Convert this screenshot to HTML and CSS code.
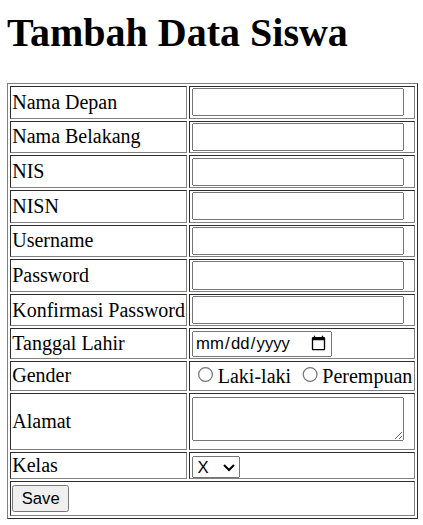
FILE: index.html
```html
<!DOCTYPE html>
<html>
<head>
<meta charset="utf-8">
<link rel="stylesheet" href="styles.css">
</head>
<body>
<h1 class="title">Tambah Data Siswa</h1>
<form>
<table class="form-table">
<tr><td>Nama Depan</td><td><input type="text" class="field"></td></tr>
<tr><td>Nama Belakang</td><td><input type="text" class="field"></td></tr>
<tr><td>NIS</td><td><input type="text" class="field"></td></tr>
<tr><td>NISN</td><td><input type="text" class="field"></td></tr>
<tr><td>Username</td><td><input type="text" class="field"></td></tr>
<tr><td>Password</td><td><input type="password" class="field"></td></tr>
<tr><td>Konfirmasi Password</td><td><input type="password" class="field"></td></tr>
<tr><td>Tanggal Lahir</td><td><input type="date" class="date"></td></tr>
<tr><td>Gender</td><td><label><input type="radio" name="g">Laki-laki</label> <label><input type="radio" name="g">Perempuan</label></td></tr>
<tr><td>Alamat</td><td><textarea class="area"></textarea></td></tr>
<tr><td>Kelas</td><td><select class="sel"><option>X</option><option>XI</option><option>XII</option></select></td></tr>
<tr><td colspan="2"><button type="button" class="btn">Save</button></td></tr>
</table>
</form>
</body>
</html>
```
FILE: styles.css
```css
body { font-family: "Liberation Serif", serif; margin: 0 0 0 5.6px; zoom: 1.25; }
.title { font-size: 32px; margin: 7.4px 0 21.44px; }
.form-table { border: 1px outset gray; border-spacing: 2px; }
.form-table td { border: 1px inset gray; padding: 1px; }
.field { width: 170px; height: 22.5px; box-sizing: border-box; font-family: "Liberation Sans", Arial, sans-serif; font-size: 13.33px; }
.date { width: 112px; height: 21px; box-sizing: border-box; font-family: "Liberation Sans", Arial, sans-serif; font-size: 13.33px; }
.area { width: 170px; height: 35px; margin: 1.5px 0 1.5px; box-sizing: border-box; font-size: 13.33px; }
.sel { height: 17.6px; vertical-align: middle; margin: -1px 0; font-family: "Liberation Sans", Arial, sans-serif; font-size: 13.33px; }
.btn { height: 22px; margin: 1px 0; box-sizing: border-box; font-family: "Liberation Sans", Arial, sans-serif; font-size: 13.33px; }
```
